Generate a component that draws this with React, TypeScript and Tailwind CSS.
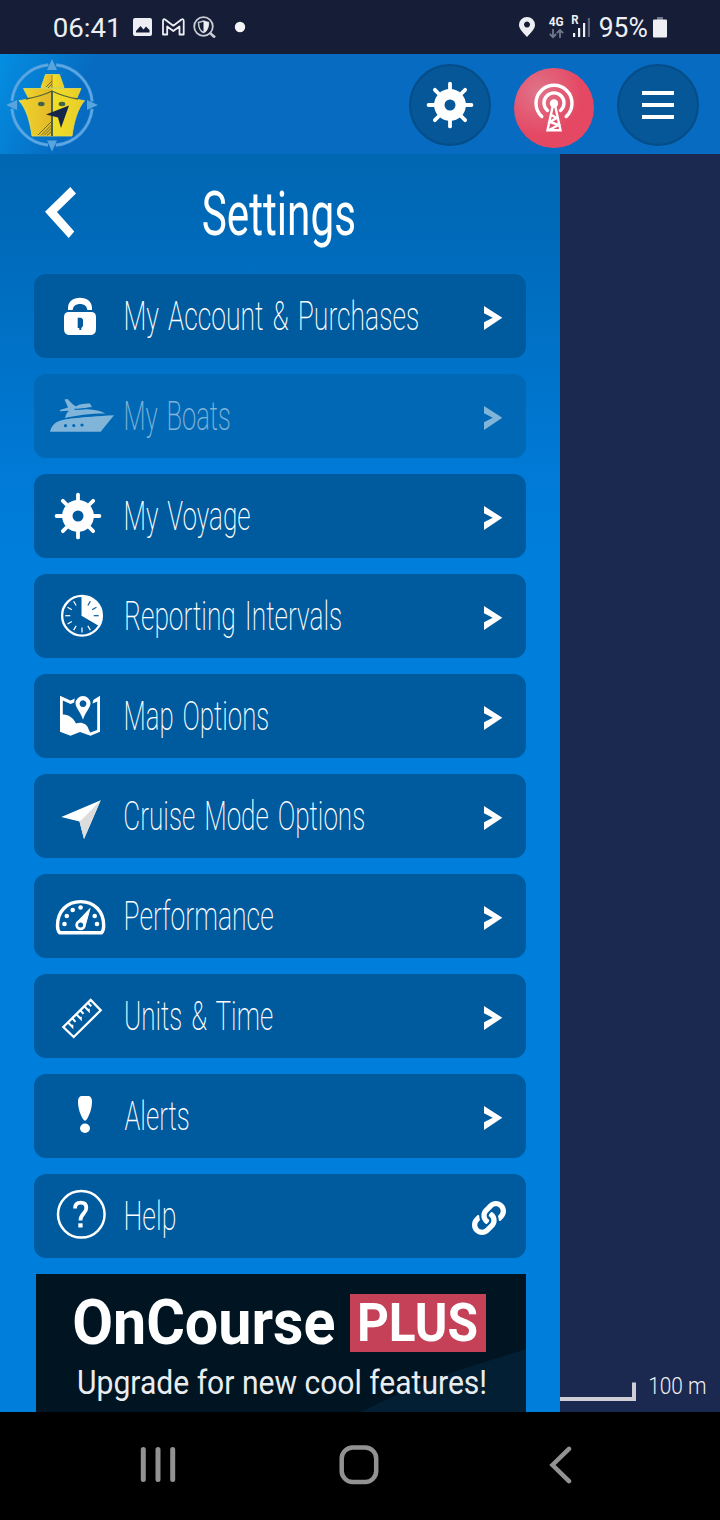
import { useLayoutEffect, useRef, type ReactNode } from "react";
import { FaLink } from "react-icons/fa";

/** Single-line text condensed or widened so that its ink fills `width` pixels. */
function FitText({ text, width, className }: { text: string; width: number; className: string }) {
  const ref = useRef<HTMLSpanElement>(null);
  useLayoutEffect(() => {
    const el = ref.current;
    const ctx = document.createElement("canvas").getContext("2d");
    if (!el || !ctx) return;
    const cs = getComputedStyle(el);
    const zoom = 10;
    ctx.font = `${cs.fontWeight} ${parseFloat(cs.fontSize) * zoom}px ${cs.fontFamily}`;
    const m = ctx.measureText(text);
    const spaces = text.split(" ").length - 1;
    const gaps = spaces * (parseFloat(cs.wordSpacing) || 0);
    const left = m.actualBoundingBoxLeft / zoom;
    const scale = width / (left + m.actualBoundingBoxRight / zoom + gaps);
    el.style.transform = `translateX(${left * scale}px) scaleX(${scale})`;
  }, [text, width]);
  return (
    <span className="flex shrink-0" style={{ width }}>
      <span ref={ref} className={`shrink-0 origin-left whitespace-nowrap leading-none ${className}`}>
        {text}
      </span>
    </span>
  );
}

const DIAGONALS = [0, 45, 90, 135, 180, 225, 270, 315];

function Wheel({ cx, cy, hole }: { cx: number; cy: number; hole: string }) {
  return (
    <g>
      {DIAGONALS.map((a) => (
        <line
          key={a}
          x1={cx}
          y1={cy - 12}
          x2={cx}
          y2={cy - 21.4}
          stroke="#fff"
          strokeWidth="3.8"
          strokeLinecap="round"
          transform={`rotate(${a} ${cx} ${cy})`}
        />
      ))}
      <circle cx={cx} cy={cy} r="15.9" fill="#fff" />
      <circle cx={cx} cy={cy} r="5.5" fill={hole} />
    </g>
  );
}

function RowIcon({ children }: { children: ReactNode }) {
  return (
    <svg className="h-[84px] w-[91px] shrink-0" viewBox="0 0 91 84" fill="none">
      {children}
    </svg>
  );
}

const lock = (
  <RowIcon>
    <path d="M34 36V34C34 27.5 39 23.7 46 23.7S58 27.5 58 34v2h-4.7C53 32 50 30 46 30s-7 2-7.3 6Z" fill="#fff" />
    <path
      fillRule="evenodd"
      d="M35 38h22q5 0 5 5v12q0 6-6 6H36q-6 0-6-6V43q0-5 5-5Zm8.700 5.700v10.300h1.600v2h2v-2L49 52V45.500L47.300 43.700Z"
      fill="#fff"
    />
  </RowIcon>
);

const boat = (
  <RowIcon>
    <g fill="#fff">
      <path d="M16 57.800C17 53 20 48.500 26 46.700C33 44.700 44 43.300 80 41.300L66.700 57.800Z" />
      <path d="M31 44C32 41 32.500 38.800 35 36.800L26 37.200V36L34 33.500L30.500 25.500L33.500 25L39 30.500L42 32.500C45 30 50 29.300 56 29.500L58 33L40.500 35.500V36C48 34.500 63 34.500 71.500 39.500C55 39.500 43 41.500 31 44Z" />
    </g>
    <path d="M40.500 35.200C49 35.600 54 33.600 60 34.200" stroke="#0068b4" strokeWidth="1" />
    <circle cx="31.500" cy="51.700" r="1.600" fill="#0068b4" />
    <circle cx="39.800" cy="51.500" r="1.600" fill="#0068b4" />
    <circle cx="48" cy="51" r="1.600" fill="#0068b4" />
  </RowIcon>
);

const voyage = (
  <RowIcon>
    <Wheel cx={44} cy={42} hole="#005a9e" />
  </RowIcon>
);

const clock = (
  <RowIcon>
    <circle cx="48" cy="41.700" r="19.900" stroke="#fff" strokeWidth="2.300" />
    <path d="M47.500 41.700V22A20 20 0 0 1 65 52Z" fill="#fff" />
    {[30, 60, 90].map((a) => (
      <line key={a} x1="48" y1="25" x2="48" y2="30" stroke="#005a9e" strokeWidth="1.200" transform={`rotate(${a} 48 41.700)`} />
    ))}
    {[150, 180, 210, 240, 270, 300, 330].map((a) => (
      <line key={a} x1="48" y1="25" x2="48" y2="30" stroke="#fff" strokeWidth="1.200" transform={`rotate(${a} 48 41.700)`} />
    ))}
  </RowIcon>
);

const map = (
  <RowIcon>
    <path
      fillRule="evenodd"
      d="M26 21.700L36.500 26.500L41 24.500C40 26 40.500 28 40.200 28.500L36.500 30L28.800 26.500V40.500C34 40 40 44.500 42 49.500C47 47.500 53 49.500 54.500 55C55.500 57.500 56 57.800 56.500 58.500L63.200 56V27.500L58.800 29.500C58.500 28 59 26.500 60 25.500L66 21.700V57.800L56.500 61.700L46 58L36.500 61.700L26 57.800Z"
      fill="#fff"
    />
    <path
      fillRule="evenodd"
      d="M49 22A7.500 7.500 0 0 1 56.500 29.300C56.500 34 51 38.500 49 45.800C47 38.500 41.500 34 41.500 29.300A7.500 7.500 0 0 1 49 22Zm0 4.300a3.400 3.400 0 1 0 .01 0Z"
      fill="#fff"
    />
  </RowIcon>
);

const cruise = (
  <RowIcon>
    <path d="M27.300 43L66.700 26.300L50 65L45.500 47.500Z" fill="#fff" />
    <path d="M66.700 26.300L50.500 43L45.500 47.500L50 65Z" fill="#dcdcdc" />
  </RowIcon>
);

const gauge = (
  <RowIcon>
    <path
      d="M25.500 58.700C24 57 23.500 54.500 23.500 51.500C23.500 37.500 33 27.600 46.600 27.600S69.700 37.500 69.700 51.500C69.700 54.500 69.200 57 67.700 58.700Z"
      stroke="#fff"
      strokeWidth="3.400"
      strokeLinejoin="round"
    />
    <g fill="#fff">
      <circle cx="30.500" cy="50" r="2.300" />
      <circle cx="32.800" cy="42" r="2.300" />
      <circle cx="38.700" cy="36" r="2.300" />
      <circle cx="46.600" cy="33.500" r="2.300" />
      <circle cx="60.700" cy="42" r="2.300" />
      <circle cx="63" cy="50" r="2.300" />
      <path d="M56 34.500L51.500 50.500L44.500 46.500Z" stroke="#fff" strokeLinejoin="round" />
    </g>
    <circle cx="46.600" cy="51" r="3.900" stroke="#fff" strokeWidth="2.800" fill="#005a9e" />
  </RowIcon>
);

const ruler = (
  <RowIcon>
    <path d="M29.300 53L56.700 26L66.700 36.300L39.700 63Z" stroke="#fff" strokeWidth="2.300" />
    <path
      d="M34 48.500l4.300 4.300v-2M38.500 44.500l3 3.300M42.500 40.500l4.300 4.300v-2M46.500 36.500l3 3.300M50.500 32.500l4.300 4.300v-2M54 29l3.300 3.300"
      stroke="#fff"
      strokeWidth="2"
    />
  </RowIcon>
);

const alert = (
  <RowIcon>
    <path d="M47 22h8q3 1 3 5.500c0 7-2.500 13.500-5 17.500q-2 3.500-4 0c-2.500-4-5-10.500-5-17.500q0-4.500 3-5.500Z" fill="#fff" />
    <ellipse cx="51" cy="54.300" rx="5" ry="4.700" fill="#fff" />
  </RowIcon>
);

const help = (
  <RowIcon>
    <circle cx="47.300" cy="40.300" r="23.300" stroke="#fff" strokeWidth="2.500" />
    <path d="M41 34.500C41 30.500 43 28.700 46.700 28.700C50.500 28.700 52.300 31 52.300 34C52.300 39.500 46.500 39.500 46.500 46.500" stroke="#fff" strokeWidth="3.800" />
    <rect x="44.300" y="49.300" width="4.300" height="4.200" fill="#fff" />
  </RowIcon>
);

function Chevron() {
  return (
    <svg className="mt-1 mr-[23px] h-6 w-[19px]" viewBox="0 0 19 24">
      <path d="M0 0L18.300 11.700L0 24V16.300L8.700 11.700L0 7.300Z" fill="#fff" />
    </svg>
  );
}

type Item = { label: string; width: number; icon: ReactNode; disabled?: boolean; link?: boolean };

const ITEMS: Item[] = [
  { label: "My Account & Purchases", width: 292, icon: lock },
  { label: "My Boats", width: 103.5, icon: boat, disabled: true },
  { label: "My Voyage", width: 124, icon: voyage },
  { label: "Reporting Intervals", width: 215, icon: clock },
  { label: "Map Options", width: 142, icon: map },
  { label: "Cruise Mode Options", width: 239, icon: cruise },
  { label: "Performance", width: 147, icon: gauge },
  { label: "Units & Time", width: 147, icon: ruler },
  { label: "Alerts", width: 63.5, icon: alert },
  { label: "Help", width: 49, icon: help, link: true },
];

function Row({ item }: { item: Item }) {
  return (
    <button
      className={`flex h-[84px] w-[492px] shrink-0 items-center rounded-xl text-left ${
        item.disabled ? "bg-[#0068b4]" : "bg-[#005a9e]"
      }`}
    >
      <span className={`flex w-full items-center ${item.disabled ? "opacity-50" : ""}`}>
        {item.icon}
        <span className={item.label.startsWith("A") || item.label.startsWith("C") ? "" : "pl-px"}>
          <FitText
            text={item.label}
            width={item.width}
            className="mt-px text-[40px] font-extralight text-white [word-spacing:4px]"
          />
        </span>
        <span className="ml-auto">
          {item.link ? <FaLink className="mt-1 mr-5 size-[34px] text-white" /> : <Chevron />}
        </span>
      </span>
    </button>
  );
}

function StatusBar() {
  return (
    <div className="flex h-[54px] shrink-0 items-center bg-[#151d37] pl-[54px] text-[#eeeff3]">
      <FitText text="06:41" width={62} className="mt-0.5 text-[26px]" />
      <svg className="ml-[17px] h-[22px] w-[114px]" viewBox="133 16 114 22" fill="none">
        <path
          fillRule="evenodd"
          d="M135 18h15q2 0 2 2v14q0 2-2 2h-15q-2 0-2-2V20q0-2 2-2Zm1 14.500h13.500v-2.500l-3.500-3.500-2.500 3-3-3.500-4.500 5Z"
          fill="#eeeff3"
        />
        <path
          d="M163 34.500V21Q163 18.500 165 19.500L173.300 25.700L181.500 19.500Q183.700 18.500 183.700 21V34.500H179.500V26.500L173.300 31L167.200 26.500V34.500Z"
          stroke="#eeeff3"
          strokeWidth="1.800"
          strokeLinejoin="round"
        />
        <circle cx="203.500" cy="26.500" r="9.300" stroke="#c9ccd5" strokeWidth="1.800" />
        <path d="M209.500 32.500L215 37.500" stroke="#c9ccd5" strokeWidth="2.600" />
        <path d="M198.500 22.500L203.500 21L208.500 22.500C208.500 28 207 31 203.500 32.500C200 31 198.500 28 198.500 22.500Z" stroke="#c9ccd5" strokeWidth="1.500" />
        <path d="M203.500 21L208.500 22.500C208.500 28 207 31 203.500 32.500Z" fill="#eeeff3" />
        <circle cx="240" cy="27" r="5.200" fill="#f4f5f7" />
      </svg>
      <svg className="ml-[272px] h-[22px] w-[16px]" viewBox="519 16 16 22">
        <path fillRule="evenodd" d="M527 17a8 8 0 0 1 8 8c0 4-4.500 8-8 12-3.500-4-8-8-8-12a8 8 0 0 1 8-8Zm0 4.600a3 3 0 1 0 .01 0Z" fill="#eeeff3" />
      </svg>
      <span className="ml-[13.500px] flex h-[22px] w-[15px] flex-col">
        <FitText text="4G" width={14} className="text-[12.5px] font-bold" />
        <svg className="h-[10px] w-[15px] shrink-0" viewBox="0 0 15 10" fill="none" stroke="#71778a" strokeWidth="1.800">
          <path d="M4 0v8M.8 5L4 8.200L7.200 5M11 9V1M7.800 4.200L11 1L14.200 4.200" />
        </svg>
      </span>
      <span className="relative ml-[7px] block h-[22px] w-[19px]">
        <svg className="h-[22px] w-[19px]" viewBox="0 0 19 22">
          <path d="M2 17h2.200v4H2ZM7 12h2.200v9H7ZM12 7h2.200v14H12Z" fill="#eeeff3" />
          <path d="M16.800 2H19v19h-2.200Z" fill="#5d6376" />
        </svg>
        <span className="absolute -top-0.5 left-px">
          <FitText text="R" width={6.5} className="text-[12px] font-bold" />
        </span>
      </span>
      <span className="ml-2.5">
        <FitText text="95%" width={47} className="mt-0.5 text-[27px]" />
      </span>
      <svg className="ml-1.5 h-[22px] w-[14px]" viewBox="0 0 14 22">
        <path d="M4 1h6v3H4Z" fill="#71778a" />
        <rect y="3.500" width="14" height="18" rx="1" fill="#eeeff3" />
      </svg>
    </div>
  );
}

function Logo() {
  return (
    <svg className="h-[100px] w-[104px]" viewBox="0 0 104 100" fill="none">
      <defs>
        <linearGradient id="hull" x1="0" y1="0" x2="1" y2="0">
          <stop offset="0" stopColor="#f0d52c" />
          <stop offset=".48" stopColor="#e3b928" />
          <stop offset=".52" stopColor="#f0de28" />
          <stop offset="1" stopColor="#e9cb28" />
        </linearGradient>
      </defs>
      <circle cx="52" cy="51" r="40.300" stroke="#4f9fdf" strokeWidth="3.200" strokeDasharray="55.300 8" strokeDashoffset="-4" />
      <circle cx="52" cy="51" r="40.300" stroke="#6db0e5" strokeWidth=".8" strokeDasharray="55.300 8" strokeDashoffset="-4" />
      <path d="M52 5L57 16H47ZM52 97.500L57 86.500H47ZM6 51L17 46V56ZM98 51L87 46V56Z" fill="#5aa4de" />
      <path d="M45.500 20.500H59.500L64 33.500H41Z" fill="url(#hull)" stroke="#e9dd4c" strokeWidth=".8" />
      <path d="M23.500 34.500H81L76.500 45H29Z" fill="url(#hull)" stroke="#e9dd4c" strokeWidth=".8" />
      <path
        d="M19 46.700C30 45 42 42 52 37C62 42 73 45 84.500 46.700C78 54 74 67 72 82H32C30 67 26 54 19 46.700Z"
        fill="url(#hull)"
        stroke="#e9dd4c"
        strokeWidth=".8"
      />
      <path d="M26 45C35 43.500 44 41 52 37C60 41 68 43.500 78 45" stroke="#55642f" strokeWidth="1.300" />
      <path d="M52 21V34" stroke="#a48b24" />
      <path d="M52 37V82" stroke="#38584b" strokeWidth="1.800" />
      <path d="M46 33L52 27M48 34L52 30M38 81L52 67M41 81.500L52 70.500M44 81.500L52 73.500M47 81.500L52 77" stroke="#5c6430" strokeWidth=".9" />
      <ellipse cx="41.300" cy="50" rx="3.300" ry="2.200" fill="#40614a" />
      <ellipse cx="62" cy="50" rx="3.300" ry="2.200" fill="#40614a" />
      <path d="M46 60.500L69 51.500L61 74L58 63.500Z" fill="#16264a" />
    </svg>
  );
}

function Header() {
  return (
    <div className="flex h-[100px] shrink-0 items-center bg-[#066bc1] bg-linear-[112deg,#048fe2_0px,#066bc1_90px]">
      <Logo />
      <button className="mt-0.5 ml-[305px] flex size-[82px] items-center justify-center rounded-full border-2 border-[#044d88] bg-[#055798]">
        <svg className="size-[50px]" viewBox="0 0 50 50">
          <Wheel cx={25} cy={25} hole="#055798" />
        </svg>
      </button>
      <button className="mt-2 ml-[23px] size-20 rounded-full bg-[#e44a64] bg-radial-[at_30%_30%] from-[#df7489] to-[#e54863] to-55%">
        <svg className="size-20" viewBox="0 0 80 80" fill="none" stroke="#fff">
          <path d="M27.800 48.500A18 18 0 1 1 52.200 48.500" strokeWidth="3.400" strokeLinecap="round" />
          <path d="M33.500 42.500A10 10 0 1 1 46.500 42.500" strokeWidth="3.400" strokeLinecap="round" />
          <circle cx="40" cy="35.500" r="4.200" fill="#fff" stroke="none" />
          <path d="M39 37L33.500 62.200H46.500L41 37M37.500 47L42.500 50L36 54L44.500 57L35 62" strokeWidth="2.400" />
        </svg>
      </button>
      <button className="mt-0.5 ml-[23px] flex size-[82px] flex-col items-center justify-center gap-2 rounded-full border-2 border-[#044d88] bg-[#055798]">
        <span className="h-1 w-8 bg-white" />
        <span className="h-1 w-8 bg-white" />
        <span className="h-1 w-8 bg-white" />
      </button>
    </div>
  );
}

function Banner() {
  return (
    <div className="relative ml-0.5 h-[138px] w-[490px] shrink-0 overflow-hidden bg-[#001421]">
      <svg className="absolute inset-0 h-[138px] w-[490px]" viewBox="0 0 490 138">
        <path d="M325 138C360 120 390 107 420 97L490 75V138Z" fill="#021f33" />
      </svg>
      <div className="relative flex items-center pt-[17px] pl-[38px]">
        <FitText text="OnCourse" width={260} className="text-[63px] font-bold text-white" />
        <div className="ml-4 flex h-[58px] w-[136px] items-center bg-[#c54158] pl-2.5">
          <FitText text="PLUS" width={117} className="mt-0.5 text-[53px] font-bold text-white" />
        </div>
      </div>
      <div className="relative mt-3 pl-[43px]">
        <FitText text="Upgrade for new cool features!" width={406} className="text-[33px] text-[#e9edf0]" />
      </div>
    </div>
  );
}

function NavBar() {
  return (
    <div className="flex h-[108px] shrink-0 items-center bg-black pl-[138px]">
      <svg className="h-10 w-10" viewBox="0 0 40 40" stroke="#929292" strokeWidth="5" strokeLinecap="round">
        <path d="M5.300 3.500V33.500M20 3.500V33.500M34.700 3.500V33.500" />
      </svg>
      <svg className="ml-[160px] h-[42px] w-[42px]" viewBox="0 0 42 42" fill="none" stroke="#929292" strokeWidth="4.500">
        <rect x="3.700" y="2.500" width="34.500" height="34.500" rx="11" />
      </svg>
      <svg className="ml-[168px] h-10 w-[28px]" viewBox="0 0 28 40" fill="none" stroke="#929292" strokeWidth="4.500" strokeLinecap="round">
        <path d="M21 2.800L4.500 19L21 35.200" />
      </svg>
    </div>
  );
}

export default function App() {
  return (
    <div className="flex h-[1520px] w-[720px] flex-col overflow-hidden bg-black font-[Roboto,sans-serif]">
      <StatusBar />
      <Header />
      <div className="flex h-[1258px] shrink-0">
        <div className="flex w-[560px] flex-col bg-[#007edc] bg-linear-[180deg,#0067b2_0px,#0069b7_60px,#007ad6_320px,#007edc_400px] pl-[34px]">
          <div className="flex h-[120px] shrink-0 items-center">
            <svg className="mb-1 ml-[11px] h-[52px] w-8" viewBox="0 0 32 52">
              <path d="M25.300 1L31 7.400L12 26L29.300 45.400L23.700 52L0 25.700Z" fill="#fff" />
            </svg>
            <span className="ml-[126px]">
              <FitText text="Settings" width={151} className="text-[62px] font-normal text-white" />
            </span>
          </div>
          <div className="flex flex-col gap-4">
            {ITEMS.map((item) => (
              <Row key={item.label} item={item} />
            ))}
            <Banner />
          </div>
        </div>
        <div className="flex flex-1 items-end bg-[#1b2850]">
          <svg className="mb-2 h-6 w-[76px]" viewBox="0 0 76 24" fill="none">
            <path d="M0 19H74V2.500" stroke="#cfced6" strokeWidth="4" />
          </svg>
          <span className="mb-3.5 ml-[14px]">
            <FitText text="100 m" width={55} className="text-[23px] font-light text-[#f0f0f4]" />
          </span>
        </div>
      </div>
      <NavBar />
    </div>
  );
}
